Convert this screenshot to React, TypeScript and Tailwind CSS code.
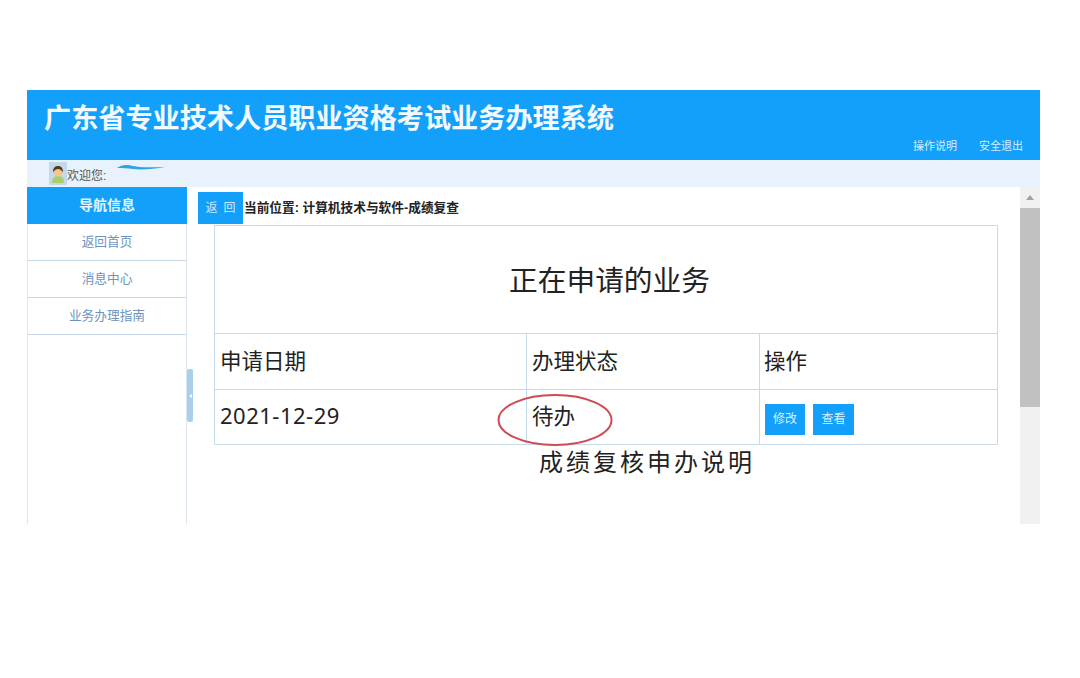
const cjk = "font-['Liberation_Sans','Noto_Sans_CJK_SC',sans-serif]";

const navItems = ["返回首页", "消息中心", "业务办理指南"];

function Avatar() {
  return (
    <div className="w-[18px] h-[23px] bg-[#c3d8ea] flex items-center justify-center">
      <svg width="14" height="18" viewBox="0 0 14 18">
        <path d="M1 18c0-5 2-7 6-7s6 2 6 7z" fill="#a9cf6d" />
        <circle cx="7" cy="7" r="4.5" fill="#f2c58f" />
        <path d="M2 7c0-4 2-6 5-6s5 2 5 6c-2-2-3-3-5-3S4 5 2 7z" fill="#5a3417" />
      </svg>
    </div>
  );
}

export default function App() {
  return (
    <div className={`w-[1080px] h-[678px] bg-white pt-[90px] pl-[27px] overflow-hidden ${cjk}`}>
      <div className="relative w-[1013px] h-[434px] flex flex-col">
        {/* Header */}
        <div className="h-[70px] bg-[#12a0fb] flex flex-col shrink-0">
          <h1 className="pl-[17px] pt-[11px] text-[27.15px] leading-[35px] font-bold text-[#f2f9ff] whitespace-nowrap">
            广东省专业技术人员职业资格考试业务办理系统
          </h1>
          <div className="mt-[3px] pr-[17px] flex justify-end gap-[22px] text-[11px] leading-[14px] text-[#d6eeff]">
            <span>操作说明</span>
            <span>安全退出</span>
          </div>
        </div>

        {/* Welcome bar */}
        <div className="h-[27px] bg-[#e8f2fd] flex items-center pl-[22px] shrink-0">
          <Avatar />
          <span className="mt-[4px] text-[12px] text-[#555]">欢迎您:</span>
          <svg className="ml-[11px] -mt-[14px]" width="48" height="6" viewBox="0 0 48 6">
            <path d="M0 4C4 1 10 0 16 2c8 2 20 1 32 1-10 2-24 3-32 2C10 4 5 4 0 4z" fill="#2ba3e6" />
          </svg>
        </div>

        {/* Body */}
        <div className="flex flex-1 min-h-0">
          {/* Sidebar */}
          <aside className="w-[160px] shrink-0 border-r border-l border-[#dbe6f0]">
            <div className="h-[37px] -mx-px bg-[#12a0fb] flex items-center justify-center text-[14px] font-bold text-[#e4f4ff]">
              导航信息
            </div>
            {navItems.map((item) => (
              <div
                key={item}
                className="h-[37px] pt-[1px] flex items-center justify-center border-b border-[#c5d9e8] text-[12.7px] text-[#6b94bf]"
              >
                {item}
              </div>
            ))}
          </aside>

          {/* Main */}
          <main className="flex-1 flex min-w-0">
            <div className="flex-1 min-w-0 pl-[11px] pt-[5px]">
              <div className="flex items-center h-[32px]">
                <button className="w-[45px] h-[32px] pl-[6px] bg-[#12a0fb] text-[12px] tracking-[6px] text-[#cdeaff]">
                  返回
                </button>
                <span className="ml-px mt-[1px] text-[12.7px] font-bold text-[#222] whitespace-nowrap">
                  当前位置: 计算机技术与软件-成绩复查
                </span>
              </div>

              <table className="ml-[16px] mt-[1px] w-[783px] h-[219px] table-fixed border-collapse border border-[#c5dbea] text-[#222]">
                <colgroup>
                  <col className="w-[312px]" />
                  <col className="w-[233px]" />
                  <col className="w-[238px]" />
                </colgroup>
                <tbody>
                  <tr className="h-[108px]">
                    <td colSpan={3} className="border border-[#c5dbea] text-center text-[28.7px] pt-[4px] pl-[7px]">
                      正在申请的业务
                    </td>
                  </tr>
                  <tr className="h-[56px] text-[21.5px]">
                    <td className="border border-[#c5dbea] pl-[5px] pt-[2px]">申请日期</td>
                    <td className="border border-[#c5dbea] pl-[5px] pt-[2px]">办理状态</td>
                    <td className="border border-[#c5dbea] pl-[4px] pt-[2px]">操作</td>
                  </tr>
                  <tr className="h-[55px] text-[21.5px]">
                    <td className="border border-[#c5dbea] pl-[5px] pb-[4px] font-['Noto_Sans'] text-[22px] tracking-[0.5px]">2021-12-29</td>
                    <td className="border border-[#c5dbea] pl-[5px]">待办</td>
                    <td className="border border-[#c5dbea] pl-[5px]">
                      <div className="flex gap-[8px] mt-[4px]">
                        <button className="w-[40px] h-[31px] bg-[#12a0fb] text-[12px] text-[#d6eeff]">修改</button>
                        <button className="w-[41px] h-[31px] bg-[#12a0fb] text-[12px] text-[#d6eeff]">查看</button>
                      </div>
                    </td>
                  </tr>
                </tbody>
              </table>

              <p className="ml-[341px] mt-[2px] text-[24px] leading-[32px] tracking-[3px] text-[#222] whitespace-nowrap">
                成绩复核申办说明
              </p>
            </div>

            {/* Scrollbar */}
            <div className="w-[20px] shrink-0 bg-[#f1f1f1] flex flex-col">
              <div className="h-[21px] flex items-center justify-center">
                <div className="w-0 h-0 border-l-[4px] border-r-[4px] border-b-[5px] border-l-transparent border-r-transparent border-b-[#a3a3a3]" />
              </div>
              <div className="h-[199px] bg-[#c1c1c1]" />
            </div>
          </main>
        </div>

        {/* Splitter handle */}
        <div className="absolute left-[160px] top-[279px] w-[6px] h-[53px] rounded-[2px] bg-[#a9cfe9] flex items-center justify-center">
          <div className="w-0 h-0 border-t-[2px] border-b-[2px] border-r-[3px] border-t-transparent border-b-transparent border-r-white" />
        </div>

        {/* Hand-drawn red annotation */}
        <svg className="absolute left-[469px] top-[302px]" width="118" height="56" viewBox="0 0 118 56">
          <ellipse cx="59" cy="28" rx="56.5" ry="25" fill="none" stroke="#cf4a55" strokeWidth="2" />
        </svg>
      </div>
    </div>
  );
}
